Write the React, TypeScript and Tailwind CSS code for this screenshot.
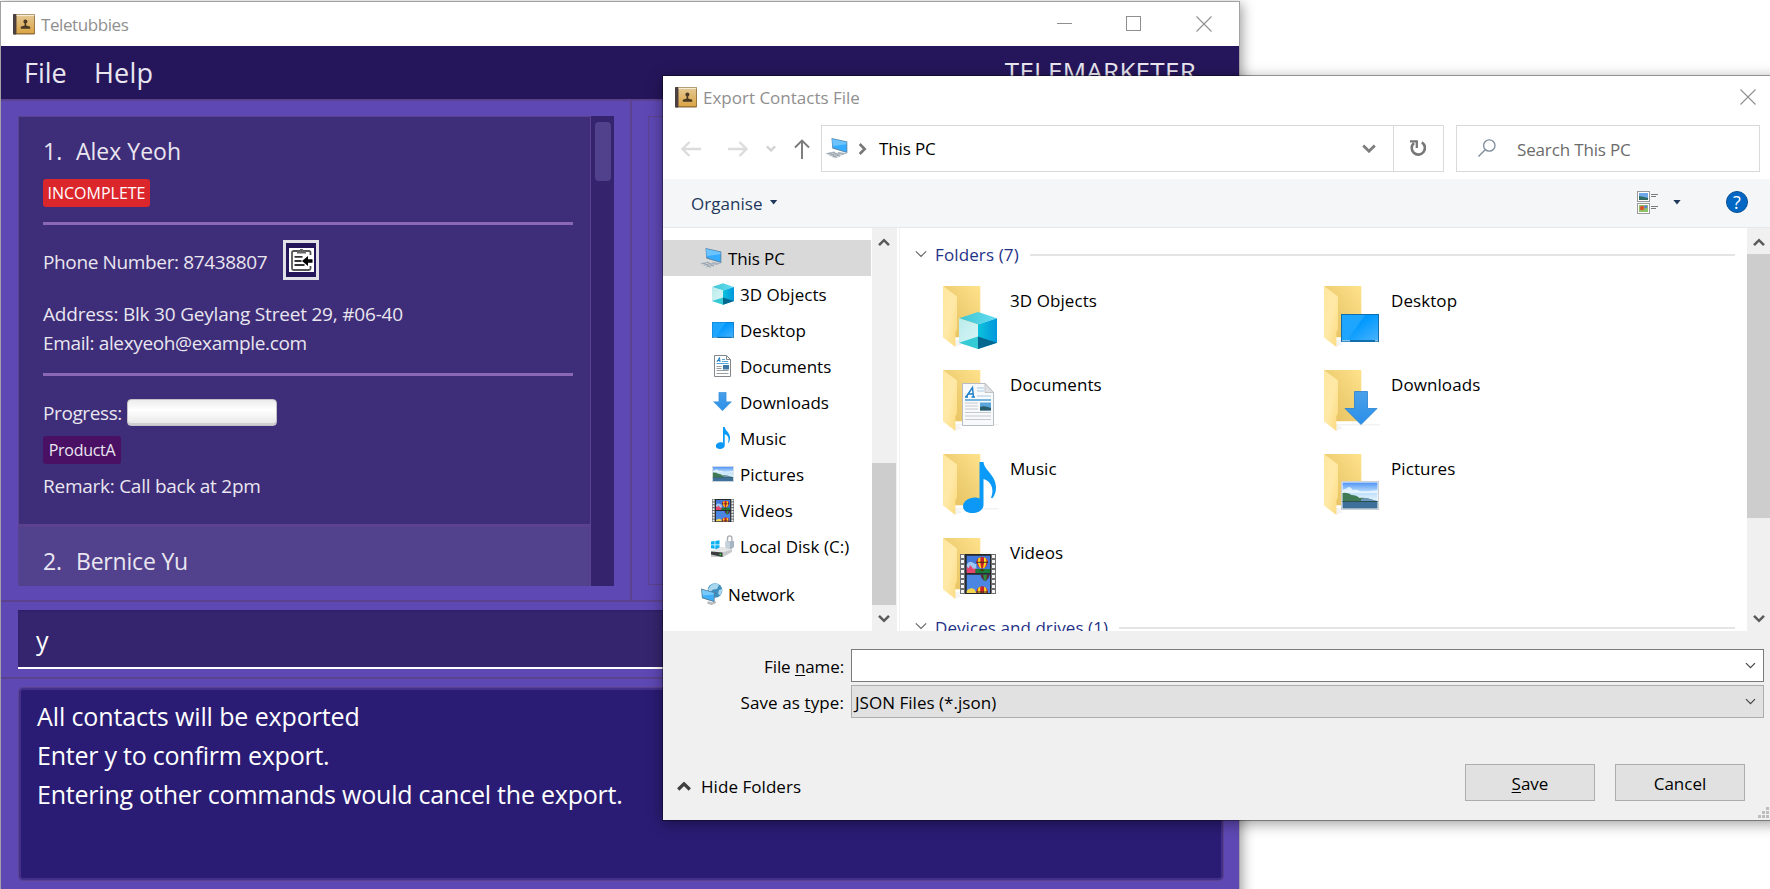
import type { ReactNode } from "react";

type IconProps = { className?: string };

function BookIcon({ className }: IconProps) {
  return (
    <svg viewBox="0 0 22 21" className={className}>
      <defs>
        <linearGradient id="book" x1="0" y1="0" x2="0" y2="1">
          <stop offset="0" stopColor="#e3c68f" />
          <stop offset="1" stopColor="#dba544" />
        </linearGradient>
      </defs>
      <rect x="0" y="0" width="22" height="20.6" rx="1" fill="#8a6a3c" />
      <rect x="0" y="0" width="3.4" height="20.6" rx="1" fill="#4b3f3f" />
      <rect x="3.4" y="0.6" width="18" height="1.4" fill="#f5ead2" />
      <rect x="3.6" y="2" width="17.6" height="17.2" fill="url(#book)" />
      <circle cx="12.4" cy="7.4" r="2" fill="#4a3a24" />
      <path d="M11.600 9h1.600v2.600l4 1.200v2H7.800v-2l3.800-1.200z" fill="#4a3a24" />
    </svg>
  );
}

function ComputerIcon({ className }: IconProps) {
  return (
    <svg viewBox="0 0 23 21" className={className}>
      <path d="M6.5 0 22.3 3.6V15L7.3 10.4z" fill="#5b87a8" />
      <path d="M7.2.9 21.4 4.2v9.5L8 9.6z" fill="#35acff" />
      <path d="M7.2.9 21.4 4.2v2L7.8 8z" fill="#6cc4ff" />
      <path d="M13 14l9.4 1.3-5 1.7-5-1.2z" fill="#a9b2ba" />
      <path d="M0 15.200l8.600-1.800 8.600 4.400-7 2.800z" fill="#d3d8dc" />
      <path d="M2 15.800l8-1.500M4.500 17.200l8-1.700M7.500 18.800l7.500-2M4.500 14.800l7.400 4.800M8.400 14l6.600 4.400" stroke="#8f9aa4" strokeWidth=".8" />
    </svg>
  );
}

function CubeIcon({ className }: IconProps) {
  return (
    <svg viewBox="0 0 38 37" className={className}>
      <defs>
        <linearGradient id="cubeR" x1="0" y1="0" x2="1" y2="0">
          <stop offset="0" stopColor="#0cc3dc" />
          <stop offset="1" stopColor="#0296dc" />
        </linearGradient>
        <linearGradient id="cubeL" x1="0" y1="0" x2="1" y2="1">
          <stop offset="0" stopColor="#b9ecec" />
          <stop offset="1" stopColor="#dcf5f6" />
        </linearGradient>
        <linearGradient id="cubeT" x1="0" y1="0" x2="1" y2="0">
          <stop offset="0" stopColor="#3fc6d2" />
          <stop offset="1" stopColor="#64dcf2" />
        </linearGradient>
      </defs>
      <path d="M19 0 38 6.3 19 12.5 0 6.3z" fill="url(#cubeT)" />
      <path d="M0 6.3 19 12.5V37L0 30.7z" fill="url(#cubeL)" />
      <path d="M38 6.3 19 12.5V37l19-6.3z" fill="url(#cubeR)" />
      <path d="M19 24.6V37L0 30.7z" fill="#35cbd6" />
      <path d="M19 24.6V37l19-6.3z" fill="#04678f" />
    </svg>
  );
}

function DesktopIcon({ className }: IconProps) {
  return (
    <svg viewBox="0 0 38 28" preserveAspectRatio="none" className={className}>
      <defs>
        <linearGradient id="desk" x1="0" y1="0" x2="1" y2="1">
          <stop offset="0.4" stopColor="#0099ff" />
          <stop offset="1" stopColor="#47b2fc" />
        </linearGradient>
      </defs>
      <rect width="38" height="28" fill="#0f6fae" />
      <rect x="1" y="1" width="36" height="25" fill="url(#desk)" />
      <path d="M1 1h23L6.500 26H1z" fill="#1ea6ff" />
      <path d="M1 26.800h8M34 26.800h3" stroke="#bfe3fa" strokeWidth="1" />
    </svg>
  );
}

function DocumentIcon({ className }: IconProps) {
  return (
    <svg viewBox="0 0 32 43" preserveAspectRatio="none" className={className}>
      <path d="M.5.5H23l8.500 9v33H.5z" fill="#f8f9fa" stroke="#b9bcc0" />
      <path d="M23 .5v9h8.500z" fill="#dfe1e4" stroke="#b0b3b7" strokeWidth=".7" />
      <path d="M4 14 10.500 4.500 11.500 14M6 11h5M3 14h3M9.500 14h3.500" stroke="#1d7fc9" strokeWidth="1.400" fill="none" />
      <path d="M15 5h7M15 8h7M15 13h14" stroke="#a7c9e4" strokeWidth="1" />
      <path d="M3 17h26" stroke="#79b6df" strokeWidth="2" />
      <path d="M3 20h13M3 23h13M3 26h13M3 29.500h26M3 33h26M3 36.500h26" stroke="#c6cace" strokeWidth="1" />
      <rect x="18" y="19.500" width="11" height="8" fill="#5ba6da" />
      <path d="M18 24q4-2 11 1v2.500H18z" fill="#2c5d6c" />
    </svg>
  );
}

function SmallDocumentIcon({ className }: IconProps) {
  return (
    <svg viewBox="0 0 17 22" className={className}>
      <path d="M.5.5h12l4 4v17H.5z" fill="#fff" stroke="#84888c" />
      <path d="M12.500.5v4h4" fill="none" stroke="#84888c" />
      <path d="M3 7 5.500 2.500 6 7M3.500 5.500H6" stroke="#1d7fc9" fill="none" />
      <path d="M8 4.500h3M8 6.500h6M2.500 8.500h12" stroke="#58a5dc" />
      <path d="M2.500 11.500h5M2.500 13.500h5M2.500 15.500h12M2.500 18.500h12" stroke="#9a9ea3" />
      <rect x="9" y="10" width="6" height="4.500" fill="#3d77a8" />
    </svg>
  );
}

function DownloadIcon({ className }: IconProps) {
  return (
    <svg viewBox="0 0 34 34" className={className}>
      <defs>
        <linearGradient id="down" x1="0" y1="0" x2="0" y2="1">
          <stop offset="0" stopColor="#49a0ea" />
          <stop offset="1" stopColor="#2b8fe8" />
        </linearGradient>
      </defs>
      <path d="M10.500.5h13v17H33L17 33.500 1 17.500h9.500z" fill="url(#down)" stroke="#2580cf" strokeWidth=".8" />
    </svg>
  );
}

function NoteIcon({ className }: IconProps) {
  return (
    <svg viewBox="0 0 33 51" className={className}>
      <defs>
        <linearGradient id="note" x1="0" y1="0" x2="0" y2="1">
          <stop offset="0" stopColor="#0a9bf8" />
          <stop offset="1" stopColor="#0c97f5" />
        </linearGradient>
      </defs>
      <path d="M16.500 0h4c.8 8.500 12.500 13 12.500 25.500 0 4-1.200 8-3.600 10.800l-1.400-.5c3.600-8 .2-17-7.500-18.800V43c0 4.600-5 8-11 8C4 51 0 48.500 0 44.500 0 39 6 35.500 11.500 35.500c2 0 3.700.3 5 1z" fill="url(#note)" />
    </svg>
  );
}

function PictureIcon({ className }: IconProps) {
  return (
    <svg viewBox="0 0 38 29" preserveAspectRatio="none" className={className}>
      <defs>
        <linearGradient id="sky" x1="0" y1="0" x2="0" y2="1">
          <stop offset="0" stopColor="#4f93f5" />
          <stop offset=".35" stopColor="#b9dcfb" />
          <stop offset=".7" stopColor="#e6f4fb" />
        </linearGradient>
      </defs>
      <rect width="38" height="29" fill="#c4c6c9" />
      <rect x=".8" y=".8" width="36.400" height="27.400" fill="#fff" />
      <rect x="1.500" y="1.500" width="35" height="26" fill="url(#sky)" />
      <path d="M1.500 9q4-1 6-3 3 0 4 3 5-1 7 1 7 1 18-1v3h-35z" fill="#eef8ff" opacity=".8" />
      <path d="M1.500 12q5-1 9 2 5 0 8 3 7-1 18 4h-35z" fill="#3f7a55" />
      <path d="M20 18q5-2 9 0l7.500 2v1H20z" fill="#6e98bb" />
      <rect x="1.500" y="20.500" width="35" height="7" fill="#3f7099" />
      <rect x="1.500" y="20" width="35" height="1" fill="#28504f" />
    </svg>
  );
}

function Balloon({ x, y }: { x: number; y: number }) {
  return (
    <g transform={`translate(${x} ${y})`}>
      <path d="M-6 0a6 5.500 0 0 1 12 0q-1 4-4 6h-4q-3-2-4-6z" fill="#c9202a" />
      <path d="M-4 -3.800q-1.500 5 2 9.800h1.200q-1.700-5.500-1-11.300zM4 -3.800q1.500 5-2 9.800H.8q1.700-5.500 1-11.300z" fill="#ffd91c" />
      <path d="M-6 0h12" stroke="#34301e" strokeWidth="1" />
      <rect x="-1.500" y="7" width="3" height="2" fill="#4d3310" />
    </g>
  );
}

function FilmIcon({ className }: IconProps) {
  return (
    <svg viewBox="0 0 36 40" preserveAspectRatio="none" className={className}>
      <rect width="36" height="40" fill="#6d6f70" />
      <rect x="5" width="26" height="40" fill="#26282b" />
      {[1, 6, 11, 16, 21, 26, 31, 36].map((y) => (
        <g key={y} fill="#f4f4f4">
          <rect x="1" y={y} width="3" height="3" />
          <rect x="32" y={y} width="3" height="3" />
        </g>
      ))}
      <svg x="6.500" y="1.500" width="23.500" height="17.500" viewBox="0 0 24 18" preserveAspectRatio="none">
        <rect width="24" height="18" fill="#3f78d8" />
        <path d="M0 9q3-4 6-2t4 2v6H0z" fill="#9fc6ef" />
        <path d="M0 11l2 2 2-3 3 4 3-1v5H0z" fill="#e5456c" />
        <path d="M9 14h15v4H9z" fill="#1c7a3a" />
        <Balloon x={16} y={7} />
      </svg>
      <svg x="6.500" y="20.500" width="23.500" height="18.500" viewBox="0 0 24 18" preserveAspectRatio="none">
        <rect width="24" height="18" fill="#4a86e2" />
        <path d="M14 0h10q-1 4-4 6h-2q-3-2-4-6z" fill="#5b2a3a" />
        <path d="M17 0h4l-1 6h-2z" fill="#2e8a3c" />
        <path d="M0 16q3-4 8-2l2 4H0z" fill="#f0d44c" />
        <Balloon x={16} y={17} />
      </svg>
    </svg>
  );
}

function DiskIcon({ className }: IconProps) {
  return (
    <svg viewBox="0 0 23 22" className={className}>
      <path d="M0 6.500 3.600 6v3.500H0zM4.300 5.900 8.500 5.200v4.300H4.300zM0 10.300h3.600v3.500L0 13.300zM4.300 10.300h4.200v4.200l-4.200-.6z" fill="#0cb0f2" />
      <path d="M0 16.500 10 12l11 2.500v2.500l-9 5H0z" fill="#c7c9cb" />
      <path d="M0 16.500 10 12l11 2.500-9.500 3z" fill="#e4e6e7" />
      <path d="M0 16.500l11.500 1V22L0 19.500z" fill="#3a3c3e" />
      <circle cx="9.300" cy="19.400" r="1" fill="#3ad13a" />
      <path d="M16.500 6V3.500a2.200 2.600 0 0 1 4.400 0V8" fill="none" stroke="#a9adb1" strokeWidth="1.400" />
      <path d="M14.500 6.500l8.500-.6V12l-3 2.200-5.500-1.700z" fill="#a5b4c0" />
      <path d="M14.500 6.500l4.500 1v6.300l-4.500-1.300z" fill="#c5d2dc" />
    </svg>
  );
}

function NetworkIcon({ className }: IconProps) {
  return (
    <svg viewBox="0 0 22 22" className={className}>
      <circle cx="14" cy="7.500" r="7.300" fill="#3f8fbe" />
      <path d="M10 2q5-3 8 0l-2 4-4 .5-3 3-2-3zM18 7l3-1q.5 4-2 6.500l-2-2z" fill="#a9d8ee" />
      <path d="M0 5.600 13.600 9.500v9.800L1 15.300z" fill="#5a7c94" />
      <path d="M.8 6.700 12.800 10v8L1.700 14.500z" fill="#3fb0f8" />
      <path d="M.8 6.700 12.800 10v1.500l-11 1z" fill="#78c9fb" />
      <path d="M7 18.300l4 1.200 4-1v1.500l-4.500 2-4.500-1.500z" fill="#b3b8bc" />
    </svg>
  );
}

function FolderIcon({ children }: { children: ReactNode }) {
  return (
    <div className="relative h-[62px] w-[57px] shrink-0">
      <svg viewBox="0 0 57 62" className="h-[62px] w-[57px]">
        <defs>
          <linearGradient id="fBack" x1="0" y1="1" x2="1" y2="0">
            <stop offset="0" stopColor="#e6bf5c" />
            <stop offset=".5" stopColor="#efcf73" />
            <stop offset="1" stopColor="#ffe28c" />
          </linearGradient>
          <linearGradient id="fFlap" x1="0" y1="0" x2="1" y2="1">
            <stop offset="0" stopColor="#ffe7a0" />
            <stop offset=".5" stopColor="#ffe9a8" />
            <stop offset="1" stopColor="#fbda7d" />
          </linearGradient>
        </defs>
        <path d="M12 60.500 19 58.500l-4-3h41v-1.500H12z" fill="#f3f3f3" />
        <path d="M0 0h37.300v51.300H10z" fill="url(#fBack)" />
        <path d="M0 0 14 10.600V43l-1.600 3.500V61L0 51.500z" fill="url(#fFlap)" />
      </svg>
      {children}
    </div>
  );
}

function Chevron({ up, className, stroke }: { up?: boolean; className?: string; stroke: number }) {
  return (
    <svg viewBox="0 0 14 9" className={className} fill="none" stroke="currentColor" strokeWidth={stroke}>
      <path d={up ? "M1.200 7.500 7 1.800 12.800 7.500" : "M1.200 1.500 7 7.200 12.800 1.500"} />
    </svg>
  );
}

function CloseGlyph({ className }: IconProps) {
  return (
    <svg viewBox="0 0 16 16" className={className} stroke="#8f8f8f" strokeWidth="1.100">
      <path d="M.5.5l15 15M15.500.5l-15 15" />
    </svg>
  );
}

const drives: { label: string; icon: ReactNode }[] = [
  { label: "3D Objects", icon: <CubeIcon className="h-[22px] w-[22px]" /> },
  { label: "Desktop", icon: <DesktopIcon className="h-[16px] w-[22px]" /> },
  { label: "Documents", icon: <SmallDocumentIcon className="h-[22px] w-[17px]" /> },
  { label: "Downloads", icon: <DownloadIcon className="mb-px h-[19px] w-[19px]" /> },
  { label: "Music", icon: <NoteIcon className="h-[22px] w-[16px]" /> },
  { label: "Pictures", icon: <PictureIcon className="h-[16px] w-[22px]" /> },
  { label: "Videos", icon: <FilmIcon className="h-[23px] w-[22px]" /> },
  { label: "Local Disk (C:)", icon: <DiskIcon className="h-[22px] w-[23px]" /> },
];

const folders: { label: string; icon: ReactNode }[] = [
  { label: "3D Objects", icon: <CubeIcon className="absolute left-[16px] top-[26px] h-[37px] w-[38px]" /> },
  { label: "Desktop", icon: <DesktopIcon className="absolute left-[17px] top-[28px] h-[28px] w-[38px]" /> },
  { label: "Documents", icon: <DocumentIcon className="absolute left-[19px] top-[13px] h-[43px] w-[32px]" /> },
  { label: "Downloads", icon: <DownloadIcon className="absolute left-[20px] top-[21px] h-[34px] w-[34px]" /> },
  { label: "Music", icon: <NoteIcon className="absolute left-[20px] top-[8px] h-[51px] w-[33px]" /> },
  { label: "Pictures", icon: <PictureIcon className="absolute left-[17px] top-[27px] h-[29px] w-[38px]" /> },
  { label: "Videos", icon: <FilmIcon className="absolute left-[17px] top-[16px] h-[40px] w-[36px]" /> },
];

function ContactCard() {
  return (
    <div className="flex h-[411px] flex-col border border-b-[3px] border-[#5b428e] bg-[#3e2d78] pl-[24px] pt-[16px] text-[19px] leading-[29px] tracking-[-0.26px]">
      <div className="flex text-[23px] leading-[36px] tracking-normal">
        <span className="w-[33px]">1.</span>
        <span>Alex Yeoh</span>
      </div>
      <div className="mt-[10px] flex">
        <span className="h-[28px] w-[107px] rounded-[3px] bg-[#db272c] text-center text-[16px] leading-[28px] tracking-normal text-white">
          INCOMPLETE
        </span>
      </div>
      <div className="mt-[15px] h-[3px] w-[530px] bg-[#8b68b5]" />
      <div className="mt-[15px] flex h-[40px] items-center">
        <span className="w-[240px] pt-[5px] tracking-[-0.36px]">Phone Number: 87438807</span>
        <span className="flex h-[40px] w-[36px] items-center justify-center border-[3px] border-[#e3e1e8] bg-[#25165b]">
          <svg viewBox="0 0 25 24" className="h-[24px] w-[25px]">
            <rect width="25" height="24" fill="#fff" />
            <path d="M21.500 7V4.500a1.500 1.500 0 0 0-1.500-1.500H4.500A1.500 1.500 0 0 0 3 4.500v16A1.500 1.500 0 0 0 4.500 22H20a1.500 1.500 0 0 0 1.500-1.500V18" fill="none" stroke="#555" strokeWidth="1.800" />
            <path d="M8 5.500V3h3V1h3v2h3v2.500z" fill="#666" />
            <path d="M5.500 8.800h8M5.500 13h7M5.500 17h10" stroke="#333" strokeWidth="1.800" />
            <path d="M13 13l6-5v3.300h4.500v3.400H19V18z" fill="#000" />
          </svg>
        </span>
      </div>
      <p className="mt-[20px] tracking-[-0.200px]">Address: Blk 30 Geylang Street 29, #06-40</p>
      <p className="tracking-[-0.36px]">Email: alexyeoh@example.com</p>
      <div className="mt-[15px] h-[3px] w-[530px] bg-[#8b68b5]" />
      <div className="mt-[23px] flex h-[27px] items-center">
        <span className="w-[84px] pt-[2px] tracking-[-0.400px]">Progress:</span>
        <span className="h-[27px] w-[150px] rounded-[4px] border border-[#c4c2c8] bg-linear-to-b from-[#ececec] via-white via-40% to-[#e6e6e6] shadow-[inset_0_-2px_0_#d0cfd4]" />
      </div>
      <div className="mt-[10px] flex">
        <span className="h-[28px] w-[78px] rounded-[3px] bg-[#4a1063] text-center text-[16px] leading-[28px] tracking-[-0.300px]">
          ProductA
        </span>
      </div>
      <p className="mt-[8px]">Remark: Call back at 2pm</p>
    </div>
  );
}

function MainWindow() {
  return (
    <div className="absolute left-0 top-[1px] flex h-[920px] w-[1240px] flex-col border border-[#a2a2a4] bg-[#5e48b4] text-[#e9e6f0] shadow-[2px_3px_12px_rgba(0,0,0,0.4)]">
      <header className="flex h-[44px] shrink-0 items-center bg-white pl-[12px] text-[17px] text-[#8f8f8f]">
        <BookIcon className="h-[21px] w-[22px]" />
        <span className="ml-[6px] grow pt-[2px] leading-[24px] tracking-[-0.42px]">Teletubbies</span>
        <div className="flex items-center pb-px pr-[27px]">
          <span className="h-px w-[15px] bg-[#8f8f8f]" />
          <span className="ml-[54px] h-[15px] w-[15px] border border-[#8f8f8f]" />
          <CloseGlyph className="ml-[55px] h-[16px] w-[16px]" />
        </div>
      </header>
      <nav className="flex h-[53px] shrink-0 items-center bg-[#25165b] pl-[23px] pr-[43px] text-[26px] leading-[51px]">
        <span className="w-[70px] text-[27px] tracking-normal">File</span>
        <span className="grow text-[27px] tracking-[0.200px]">Help</span>
        <span className="pb-[3px] tracking-[0.280px]">TELEMARKETER</span>
      </nav>

      <div className="flex h-[501px] shrink-0 border-t-2 border-[#5b428e]">
        <div className="flex w-[629px] pl-[17px] pt-[15px]">
          <div className="h-[470px] w-[573px] overflow-hidden">
            <ContactCard />
            <div className="h-[120px] border-x border-[#5b428e] bg-[#52418c] pl-[24px] pt-[16px]">
              <div className="flex text-[23px] leading-[36px] tracking-[-0.200px]">
                <span className="w-[33px]">2.</span>
                <span>Bernice Yu</span>
              </div>
            </div>
          </div>
          <div className="h-[470px] w-[23px] bg-[#35246d] pl-[4px] pt-[6px]">
            <div className="h-[59px] w-[16px] rounded-[4px] bg-[#51408b]" />
          </div>
        </div>
        <div className="grow border-l-2 border-[#5b428e] pb-[15px] pl-[16px] pr-[17px] pt-[15px]">
          <div className="h-[469px] border border-[#5b428e]" />
        </div>
      </div>

      <div className="h-[77px] shrink-0 border-t-2 border-[#5b428e] px-[17px] pt-[8px]">
        <div className="h-[59px] border-b-2 border-white bg-[#35256e] shadow-[inset_0_1px_2px_#2b1e66]">
          <p className="pl-[18px] pt-[11px] text-[25px] leading-[39px] text-white">y</p>
        </div>
      </div>

      <div className="shrink-0 border-t-2 border-[#5b428e] pl-[18px] pr-[16px] pt-[9px]">
        <div className="h-[192px] rounded-[4px] border-2 border-[#43308a] bg-[#2a1c74] pl-[16px] pt-[7px] text-[25px] leading-[39px] text-white outline-1 outline-[#5b428e]">
          <p className="tracking-[-0.110px]">All contacts will be exported</p>
          <p className="tracking-[-0.230px]">Enter y to confirm export.</p>
          <p className="tracking-[-0.220px]">Entering other commands would cancel the export.</p>
        </div>
      </div>
    </div>
  );
}

function NavigationBar() {
  return (
    <div className="flex h-[60px] shrink-0 items-start pt-[6px]">
      <div className="flex h-[47px] w-[158px] items-center pl-[18px]">
        <svg viewBox="0 0 20 16" className="h-[16px] w-[20px]" fill="none" stroke="#dcdcdc" strokeWidth="2.300">
          <path d="M20 8H1.500M8.500 1 1.500 8l7 7" />
        </svg>
        <svg viewBox="0 0 20 16" className="ml-[27px] h-[16px] w-[20px]" fill="none" stroke="#dcdcdc" strokeWidth="2.300">
          <path d="M0 8h18.500M11.500 1l7 7-7 7" />
        </svg>
        <Chevron stroke={3.4} className="ml-[18px] h-[7px] w-[10px] text-[#d4d4d4]" />
        <svg viewBox="0 0 16 20" className="ml-[18px] h-[20px] w-[16px]" fill="none" stroke="#7a7a7a" strokeWidth="1.900">
          <path d="M8 20V1.500M1 8.500l7-7 7 7" />
        </svg>
      </div>
      <div className="flex h-[47px] w-[623px] items-center border border-[#d9d9d9] pl-[3px]">
        <ComputerIcon className="h-[21px] w-[23px]" />
        <svg viewBox="0 0 8 12" className="ml-[10px] h-[12px] w-[9px]" fill="none" stroke="#777" strokeWidth="2.600">
          <path d="M1.200 1l5 5-5 5" />
        </svg>
        <span className="ml-[12px] grow pt-px tracking-[-0.120px]">This PC</span>
        <Chevron stroke={2.8} className="mr-[17px] h-[9px] w-[14px] text-[#7d7d7d]" />
        <span className="flex h-[45px] w-[50px] items-center justify-center border-l border-[#d9d9d9]">
          <svg viewBox="0 0 17 17" className="h-[17px] w-[17px]" fill="none" stroke="#777" strokeWidth="2.600">
            <path d="M11.800 2.400A6.600 6.600 0 1 1 4 3" />
            <path d="M0 1.300h6.800V8" strokeWidth="2.300" />
          </svg>
        </span>
      </div>
      <div className="ml-[12px] flex h-[47px] w-[304px] items-center border border-[#d9d9d9] pl-[21px]">
        <svg viewBox="0 0 18 18" className="mb-px h-[18px] w-[18px]" fill="none" stroke="#7c8a9c" strokeWidth="1.300">
          <circle cx="11.300" cy="6.500" r="5.700" />
          <path d="M7.200 10.700.5 17.500" />
        </svg>
        <span className="ml-[21px] pt-[2px] tracking-[-0.150px] text-[#6b6b6b]">Search This PC</span>
      </div>
    </div>
  );
}

function Toolbar() {
  return (
    <div className="flex h-[49px] shrink-0 items-center border-b border-[#e6e8ea] bg-[#f4f6f8] pl-[28px] text-[#1e395b]">
      <span className="pt-[2px] tracking-[0.050px]">Organise</span>
      <span className="mb-[2px] ml-[7px] h-[5px] w-[8px] bg-[#1e395b] [clip-path:polygon(0_0,100%_0,50%_100%)]" />
      <svg viewBox="0 0 21 23" className="mb-[2px] ml-auto h-[23px] w-[21px]">
        <rect x=".5" y=".5" width="12" height="10" fill="#fff" stroke="#9a9a9a" />
        <rect x="2" y="2" width="9" height="7" fill="#6ea8e8" />
        <path d="M2 5l5 1 4 1v2H2z" fill="#2f6b62" />
        <rect x=".5" y="12.500" width="12" height="10" fill="#fff" stroke="#9a9a9a" />
        <rect x="2" y="14" width="9" height="7" fill="#8fc06a" />
        <circle cx="5" cy="17" r="2.200" fill="#d9542b" />
        <circle cx="8.800" cy="15.800" r="1.600" fill="#5e7bd8" />
        <path d="M14 3.500h7M14 5.500h5M14 15.500h7M14 17.500h5" stroke="#7c7c7c" />
      </svg>
      <span className="mb-[2px] ml-[15px] h-[5px] w-[8px] bg-[#1e395b] [clip-path:polygon(0_0,100%_0,50%_100%)]" />
      <span className="mb-[2px] ml-[45px] mr-[35px] flex h-[22px] w-[22px] items-center justify-center rounded-full border border-[#0a4f92] bg-[#0067c5] text-[18px] leading-[20px] text-white">
        ?
      </span>
    </div>
  );
}

function Sidebar() {
  return (
    <div className="flex w-[237px] shrink-0">
      <div className="w-[209px] pt-[12px]">
        <div className="flex h-[36px] w-[208px] items-center bg-[#d9d9d9] pl-[36px]">
          <ComputerIcon className="h-[21px] w-[23px]" />
          <span className="ml-[6px] pt-[2px] tracking-[-0.100px]">This PC</span>
        </div>
        {drives.map((d) => (
          <div key={d.label} className="flex h-[36px] items-center pl-[48px]">
            <span className="flex w-[23px] justify-center">{d.icon}</span>
            <span className="ml-[6px] whitespace-nowrap pt-[2px] tracking-[0.040px]">{d.label}</span>
          </div>
        ))}
        <div className="mt-[12px] flex h-[36px] items-center pl-[38px]">
          <NetworkIcon className="h-[22px] w-[22px]" />
          <span className="ml-[5px] pt-[2px] tracking-[-0.170px]">Network</span>
        </div>
      </div>
      <div className="flex w-[25px] flex-col items-center bg-[#f0f0f0] pt-[10px] text-[#5a5a5a]">
        <Chevron up stroke={3} className="mr-px h-[9px] w-[12px]" />
        <div className="mt-[216px] h-[142px] w-[24px] self-start bg-[#cdcdcd]" />
        <Chevron stroke={3} className="mr-px mt-[9px] h-[9px] w-[12px]" />
      </div>
      <div className="ml-[2px] w-px bg-[#f2f2f2]" />
    </div>
  );
}

function FileArea() {
  return (
    <div className="flex grow overflow-hidden">
      <div className="h-[403px] w-[847px] overflow-hidden">
        <div className="flex h-[54px] items-center pl-[14px] text-[#1f3287]">
          <Chevron stroke={1.300} className="mb-[3px] h-[8px] w-[14px] text-[#666]" />
          <span className="ml-[7px] tracking-[0.120px]">Folders (7)</span>
          <span className="ml-[11px] mr-[12px] h-[2px] grow bg-[#e4e4e4]" />
        </div>
        <div className="grid h-[340px] auto-rows-[84px] grid-cols-[381px_381px] pl-[43px] pt-[4px]">
          {folders.map((f) => (
            <div key={f.label} className="flex">
              <FolderIcon>{f.icon}</FolderIcon>
              <span className="ml-[10px] pt-[2px] leading-[25px] tracking-[0.080px]">{f.label}</span>
            </div>
          ))}
        </div>
        <div className="flex h-[24px] items-center pl-[14px] text-[#1f3287]">
          <Chevron stroke={1.300} className="-mt-[16px] h-[8px] w-[14px] text-[#666]" />
          <span className="-mt-[13px] ml-[7px] leading-[24px] tracking-[0.070px]">Devices and drives (1)</span>
          <span className="-mt-[12px] ml-[11px] mr-[12px] h-[2px] grow bg-[#e4e4e4]" />
        </div>
      </div>
      <div className="flex w-[23px] flex-col items-center bg-[#f0f0f0] pt-[10px] text-[#5a5a5a]">
        <Chevron up stroke={3} className="ml-px h-[9px] w-[12px] shrink-0" />
        <div className="mt-[7px] h-[264px] w-[23px] bg-[#cdcdcd]" />
        <Chevron stroke={3} className="ml-px mt-[96px] h-[9px] w-[12px]" />
      </div>
    </div>
  );
}

function Footer() {
  return (
    <div className="relative flex grow flex-col bg-[#f0f0f0] pt-[18px]">
      <div className="flex h-[33px] items-center">
        <span className="w-[181px] pt-[3px] text-right tracking-[-0.100px]">
          File <span className="underline underline-offset-2">n</span>ame:
        </span>
        <span className="ml-[7px] flex h-[33px] w-[913px] items-center justify-end border border-[#7a7a7a] bg-white pr-[7px]">
          <Chevron stroke={1.600} className="h-[7px] w-[11px] text-[#444]" />
        </span>
      </div>
      <div className="mt-[3px] flex h-[33px] items-center">
        <span className="w-[181px] pt-[3px] text-right tracking-[0.100px]">
          Save as <span className="underline underline-offset-2">t</span>ype:
        </span>
        <span className="ml-[7px] flex h-[33px] w-[913px] items-center justify-between border border-[#adadad] bg-[#e1e1e1] pl-[3px] pr-[7px]">
          <span className="pt-[3px] tracking-[0.030px]">JSON Files (*.json)</span>
          <Chevron stroke={1.600} className="h-[7px] w-[11px] text-[#444]" />
        </span>
      </div>
      <div className="mt-[46px] flex h-[37px] items-center pl-[14px]">
        <Chevron up stroke={3.200} className="mt-[7px] h-[9px] w-[14px] text-[#404040]" />
        <span className="ml-[10px] mr-auto pt-[8px] tracking-[0.050px]">Hide Folders</span>
        <button className="h-[37px] w-[130px] border border-[#adadad] bg-[#e1e1e1] pt-[2px]">
          <span className="underline underline-offset-2">S</span>ave
        </button>
        <button className="ml-[20px] mr-[38px] h-[37px] w-[130px] border border-[#adadad] bg-[#e1e1e1] pt-[2px]">Cancel</button>
      </div>
      <svg viewBox="0 0 12 12" className="absolute bottom-[1px] right-[13px] h-[12px] w-[12px]" fill="#bdbdbd">
        <path d="M0 8h3v3H0zM4 8h3v3H4zM8 8h3v3H8zM4 4h3v3H4zM8 4h3v3H8zM8 0h3v3H8z" />
      </svg>
    </div>
  );
}

function ExportDialog() {
  return (
    <div className="absolute left-[663px] top-[76px] flex h-[744px] w-[1120px] flex-col bg-white text-[17px] leading-[24px] text-black shadow-[0_0_0_1px_rgba(0,0,0,0.35),0_3px_14px_rgba(0,0,0,0.42)]">
      <header className="flex h-[43px] shrink-0 items-center pl-[12px] pr-[28px] text-[#8f8f8f]">
        <BookIcon className="h-[21px] w-[22px]" />
        <span className="ml-[6px] grow pt-px">Export Contacts File</span>
        <CloseGlyph className="-mr-px mb-px h-[16px] w-[16px]" />
      </header>
      <NavigationBar />
      <Toolbar />
      <div className="flex h-[403px] w-[1107px] shrink-0">
        <Sidebar />
        <FileArea />
      </div>
      <Footer />
    </div>
  );
}

export default function App() {
  return (
    <main className="relative h-[889px] w-[1770px] overflow-hidden bg-white font-['Open_Sans','Noto_Sans',sans-serif]">
      <MainWindow />
      <ExportDialog />
    </main>
  );
}
